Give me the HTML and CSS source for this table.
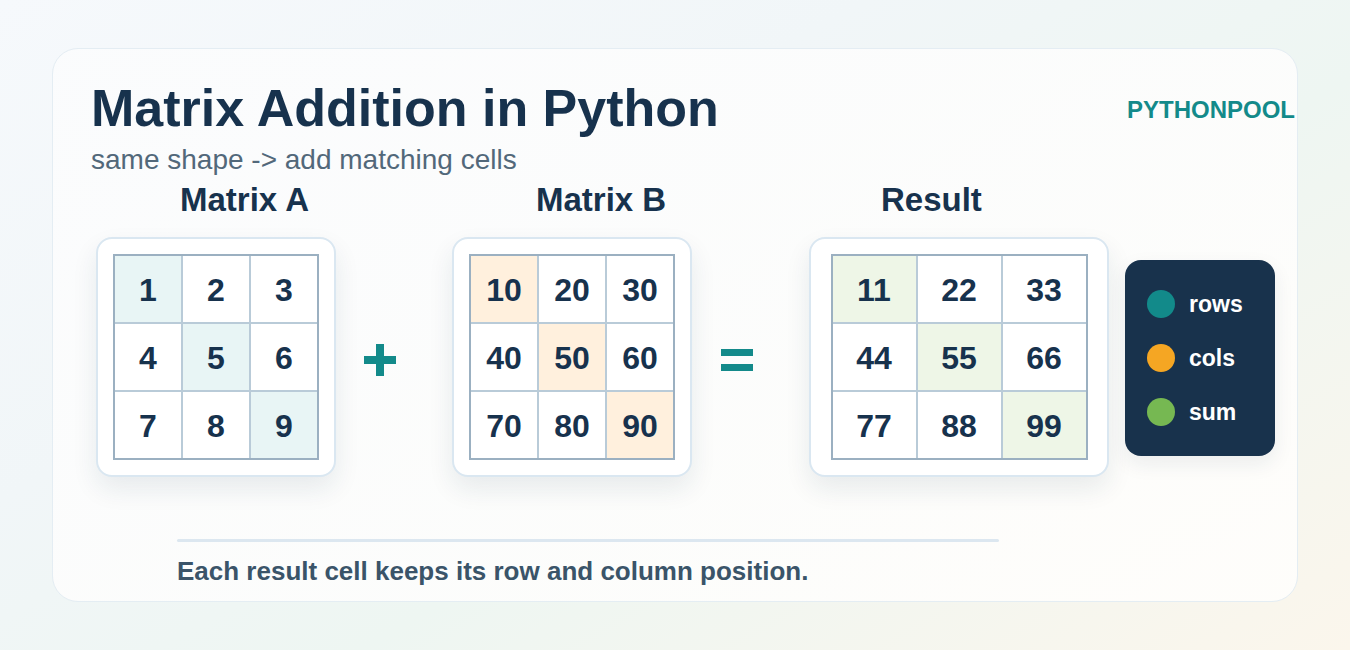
FILE: index.html
```html
<!DOCTYPE html>
<html lang="en">
<head>
<meta charset="utf-8">
<title>Matrix Addition in Python</title>
<link rel="stylesheet" href="styles.css">
</head>
<body>
<div class="page">
  <div class="card">
    <div class="header">
      <h1 class="title">Matrix Addition in Python</h1>
      <div class="brand">PYTHONPOOL</div>
    </div>
    <p class="subtitle">same shape -&gt; add matching cells</p>

    <div class="stage">
      <div class="label label-a">Matrix A</div>
      <div class="label label-b">Matrix B</div>
      <div class="label label-r">Result</div>

      <div class="mcard">
        <div class="matrix">
          <div class="cell hl-a">1</div><div class="cell">2</div><div class="cell">3</div>
          <div class="cell">4</div><div class="cell hl-a">5</div><div class="cell">6</div>
          <div class="cell">7</div><div class="cell">8</div><div class="cell hl-a">9</div>
        </div>
      </div>

      <div class="op">
        <svg width="32" height="32" viewBox="0 0 32 32"><rect x="12" y="0" width="8" height="32" fill="#138a8a"/><rect x="0" y="12" width="32" height="8" fill="#138a8a"/></svg>
      </div>

      <div class="mcard">
        <div class="matrix">
          <div class="cell hl-b">10</div><div class="cell">20</div><div class="cell">30</div>
          <div class="cell">40</div><div class="cell hl-b">50</div><div class="cell">60</div>
          <div class="cell">70</div><div class="cell">80</div><div class="cell hl-b">90</div>
        </div>
      </div>

      <div class="op">
        <svg width="32" height="24" viewBox="0 0 32 24"><rect x="0" y="1" width="32" height="7" fill="#138a8a"/><rect x="0" y="16" width="32" height="7" fill="#138a8a"/></svg>
      </div>

      <div class="mcard mcard-wide">
        <div class="matrix matrix-wide">
          <div class="cell hl-r">11</div><div class="cell">22</div><div class="cell">33</div>
          <div class="cell">44</div><div class="cell hl-r">55</div><div class="cell">66</div>
          <div class="cell">77</div><div class="cell">88</div><div class="cell hl-r">99</div>
        </div>
      </div>

      <div class="legend">
        <div class="legend-item"><span class="dot dot-rows"></span>rows</div>
        <div class="legend-item"><span class="dot dot-cols"></span>cols</div>
        <div class="legend-item"><span class="dot dot-sum"></span>sum</div>
      </div>
    </div>

    <div class="divider"></div>
    <p class="footer">Each result cell keeps its row and column position.</p>
  </div>
</div>
</body>
</html>
```

FILE: styles.css
```css
* { box-sizing: border-box; }

html, body {
  margin: 0;
  padding: 0;
}

body {
  width: 1350px;
  height: 650px;
  overflow: hidden;
  font-family: "Liberation Sans", Arial, sans-serif;
  background: linear-gradient(150deg, #f6f9fc 0%, #f1f6f8 35%, #eef6f2 60%, #fbf6ec 100%);
  color: #17324d;
}

.page {
  padding: 48px 52px;
}

.card {
  width: 1246px;
  height: 554px;
  border: 1px solid #e4edf3;
  border-radius: 26px;
  background: linear-gradient(150deg, rgba(251,252,253,0.92), rgba(255,254,252,0.9));
  padding: 33px 2px 0 38px;
}

.header {
  display: flex;
  justify-content: space-between;
  align-items: flex-start;
}

.title {
  margin: 0;
  font-size: 52px;
  line-height: 52px;
  font-weight: 700;
  color: #17324d;
}

.brand {
  margin-top: 16px;
  font-size: 24px;
  line-height: 24px;
  font-weight: 700;
  color: #138a8a;
}

.subtitle {
  margin: 12px 0 0 0;
  font-size: 28px;
  line-height: 28px;
  color: #52687a;
}

.stage {
  margin-top: 9px;
  padding-left: 5px;
  display: grid;
  grid-template-columns: 240px 116px 240px 117px 300px 16px 150px;
  grid-template-rows: 33px 240px;
  row-gap: 21px;
}

.label {
  font-size: 33px;
  line-height: 33px;
  font-weight: 700;
  color: #17324d;
  grid-row: 1;
}
.label-a { grid-column: 1 / 3; padding-left: 84px; }
.label-b { grid-column: 3 / 5; padding-left: 84px; }
.label-r { grid-column: 5 / 6; padding-left: 72px; }

.mcard {
  grid-row: 2;
  width: 240px;
  height: 240px;
  background: #ffffff;
  border: 2px solid #dae7f1;
  border-radius: 16px;
  box-shadow: 0 12px 26px rgba(24, 50, 76, 0.09);
  display: flex;
  align-items: center;
  justify-content: center;
}
.mcard-wide { width: 300px; }

.matrix {
  display: grid;
  grid-template-columns: repeat(3, 66px);
  grid-template-rows: repeat(3, 66px);
  gap: 2px;
  background: #b9cbd8;
  border: 2px solid #9bb0c1;
}
.matrix-wide {
  grid-template-columns: repeat(3, 83px);
}

.cell {
  background: #ffffff;
  display: flex;
  align-items: center;
  justify-content: center;
  padding-top: 2px;
  font-size: 32px;
  font-weight: 700;
  color: #17324d;
}
.hl-a { background: #e8f5f5; }
.hl-b { background: #fff0dd; }
.hl-r { background: #eef6e7; }

.op {
  grid-row: 2;
  display: flex;
  align-items: center;
  justify-content: center;
  padding-right: 28px;
  padding-top: 6px;
}

.legend {
  grid-row: 2;
  grid-column: 7;
  align-self: center;
  margin-top: 2px;
  background: #18324c;
  border-radius: 16px;
  padding: 30px 0 30px 22px;
  display: flex;
  flex-direction: column;
  gap: 26px;
  box-shadow: 0 8px 20px rgba(24, 50, 76, 0.08);
}

.legend-item {
  display: flex;
  align-items: center;
  gap: 14px;
  height: 28px;
  font-size: 23px;
  font-weight: 700;
  color: #ffffff;
}

.dot {
  width: 28px;
  height: 28px;
  border-radius: 50%;
  flex: none;
}
.dot-rows { background: #128a8a; }
.dot-cols { background: #f5a623; }
.dot-sum { background: #76b852; }

.divider {
  margin: 62px 0 0 86px;
  width: 822px;
  height: 3px;
  border-radius: 2px;
  background: #dce7f0;
}

.footer {
  margin: 16px 0 0 86px;
  font-size: 26px;
  line-height: 26px;
  font-weight: 700;
  color: #3a5469;
}
```
